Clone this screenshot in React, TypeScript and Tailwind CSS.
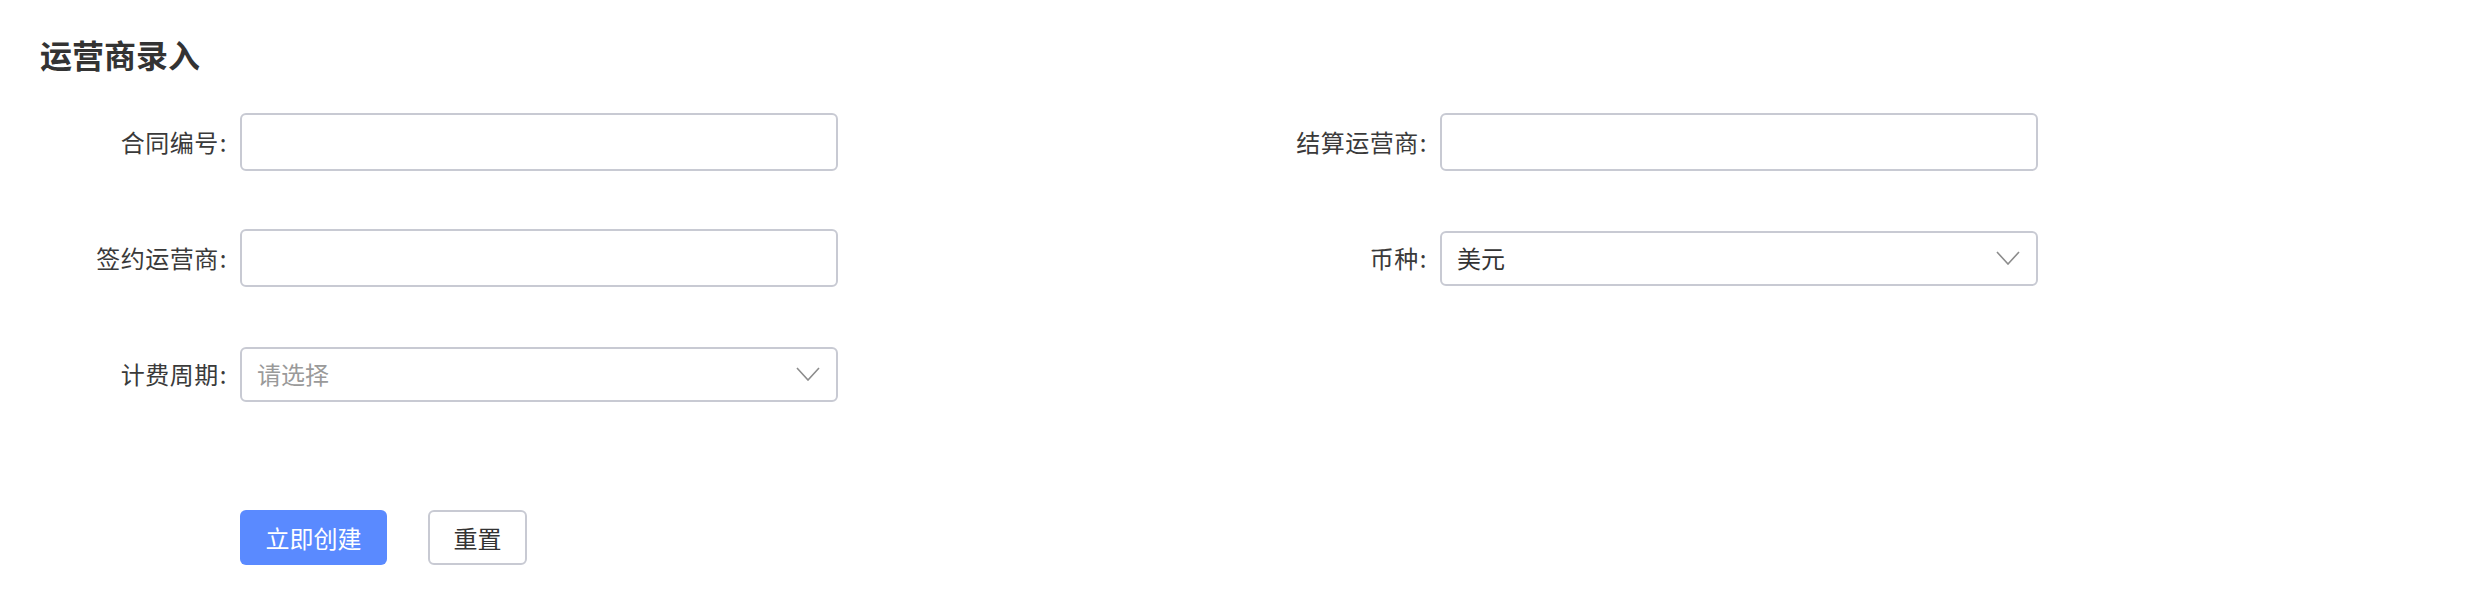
import React from "react"

const Chevron = () => (
  <svg width="24" height="14" viewBox="0 0 24 14" fill="none" className="shrink-0">
    <polyline points="1,1 12,13 23,1" stroke="#8c8c8c" strokeWidth="1.6" />
  </svg>
)

const TextInput = () => (
  <div className="h-[58px] w-[598px] rounded-[6px] border-2 border-[#c8cad3] bg-white" />
)

const SelectBox = ({ value, placeholder }: { value?: string; placeholder?: string }) => (
  <div className="flex h-[55px] w-[598px] items-center justify-between rounded-[6px] border-2 border-[#c8cad3] bg-white pl-[15px] pr-[16px]">
    {value ? (
      <span className="text-[24px] text-[#333333]">{value}</span>
    ) : (
      <span className="text-[24px] text-[#9a9a9a]">{placeholder}</span>
    )}
    <Chevron />
  </div>
)

const Field = ({ label, children }: { label: string; children: React.ReactNode }) => (
  <div className="flex h-[58px] w-[1200px] items-center">
    <label className="w-[200px] pr-[13px] text-right text-[24px] tracking-[0.5px] text-[#3a3a3a]">
      {label}
      <span className="pl-[1px]">:</span>
    </label>
    {children}
  </div>
)

const App = () => {
  return (
    <div
      className="min-h-[616px] w-[2480px] bg-white pl-[40px] pt-[30px]"
      style={{ fontFamily: '"Noto Sans CJK SC", "Noto Sans", sans-serif' }}
    >
      <h2 className="text-[32px] font-bold leading-[48px] text-[#333333]">运营商录入</h2>

      <div className="mt-[35px] grid grid-cols-[1200px_1200px] gap-y-[58px]">
        <Field label="合同编号">
          <TextInput />
        </Field>
        <Field label="结算运营商">
          <TextInput />
        </Field>
        <Field label="签约运营商">
          <TextInput />
        </Field>
        <Field label="币种">
          <SelectBox value="美元" />
        </Field>
        <Field label="计费周期">
          <SelectBox placeholder="请选择" />
        </Field>
      </div>

      <div className="mt-[107px] flex gap-[41px] pl-[200px]">
        <button className="h-[55px] w-[147px] rounded-[6px] bg-[#5a8aff] text-[24px] text-white">
          立即创建
        </button>
        <button className="h-[55px] w-[99px] rounded-[6px] border-2 border-[#c8cad3] bg-white text-[24px] text-[#333333]">
          重置
        </button>
      </div>
    </div>
  )
}

export default App
